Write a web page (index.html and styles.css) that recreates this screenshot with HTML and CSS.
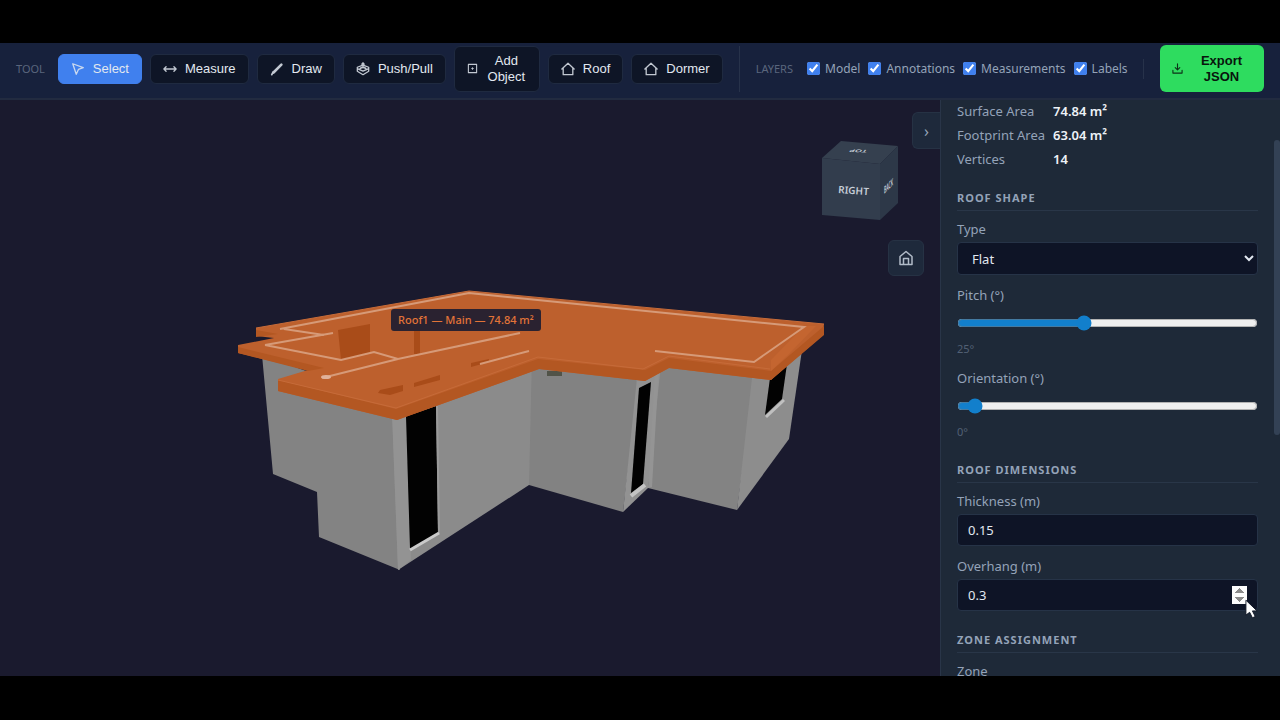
FILE: index.html
```html
<!DOCTYPE html>
<html lang="en">
<head>
<meta charset="utf-8">
<title>Roof Editor</title>
<link rel="stylesheet" href="styles.css">
</head>
<body>
<div class="app">
  <header class="toolbar">
    <span class="caption">TOOL</span>
    <div class="tools">
      <button class="tool tool-active" type="button"><svg class="icon" viewBox="0 0 16 16"><path d="M2 2l12 4.500-5.500 2L6 14z"/></svg><span>Select</span></button>
      <button class="tool" type="button"><svg class="icon" viewBox="0 0 16 16"><path d="M1 8h14M3.500 5.500L1 8 3.500 10.500M12.500 5.500L15 8 12.500 10.500"/></svg><span>Measure</span></button>
      <button class="tool" type="button"><svg class="icon" viewBox="0 0 16 16"><path d="M4 12L13 3" stroke-width="3"/><path d="M2 14.500l1.500-3" stroke-width="2"/></svg><span>Draw</span></button>
      <button class="tool" type="button"><svg class="icon" viewBox="0 0 16 16"><path d="M8 3.500L1.500 6v4.500L8 14.500l6.500-4V6zM1.500 7.500L8 10.500l6.500-3M4 8.500C5 5.500 11 5.500 12 8.500M8 1v4"/><circle cx="8" cy="2.500" r="1.200"/></svg><span>Push/Pull</span></button>
      <button class="tool tool-wrap" type="button"><svg class="icon icon-small" viewBox="0 0 12 12"><rect x="1.500" y="1.500" width="9" height="9"/><path d="M6 5.200v1.600M5.200 6h1.600"/></svg><span>Add Object</span></button>
      <button class="tool" type="button"><svg class="icon" viewBox="0 0 16 16"><path d="M1 8L8 1.500 15 8M2.500 7v7.500h11V7"/></svg><span>Roof</span></button>
      <button class="tool" type="button"><svg class="icon" viewBox="0 0 16 16"><path d="M1 8L8 1.500 15 8M2.500 7v7.500h11V7"/></svg><span>Dormer</span></button>
    </div>
    <div class="layers">
      <span class="caption">LAYERS</span>
      <label class="layer"><input type="checkbox" checked>Model</label>
      <label class="layer"><input type="checkbox" checked>Annotations</label>
      <label class="layer"><input type="checkbox" checked>Measurements</label>
      <label class="layer"><input type="checkbox" checked>Labels</label>
    </div>
    <span class="divider"></span>
    <button class="export" type="button"><svg class="icon icon-small" viewBox="0 0 12 12"><path d="M6 1v6M3.500 5L6 7.500 8.500 5M1 8v3h10V8"/></svg><span>Export JSON</span></button>
  </header>
  <div class="workspace">
    <main class="viewport">
      <svg class="scene" viewBox="0 0 940 576" preserveAspectRatio="xMidYMid slice" role="img" aria-label="Building model">
        <g transform="translate(0 -100)">
          <path fill="#838383" d="M262 355L400 405V570L319 537L317 492L273 474z"/>
          <path fill="#828282" d="M529 360L640 370L623 512L529 485z"/>
          <path fill="#8b8b8b" d="M392 410L532 355L529 485L398 570z"/>
          <path fill="#939393" d="M392 414L407 408L411 560L398 570z"/>
          <path fill="#020202" d="M406 416L436 406L438 533L410 549z"/>
          <path fill="none" stroke="#9a9a9a" stroke-width="2" d="M437 406L439 534"/>
          <path fill="none" stroke="#cacaca" stroke-width="3" d="M410 550L439 533"/>
          <path fill="#929292" d="M637 378L668 364L648 488L623 512z"/>
          <path fill="#838383" d="M661 364L755 374L737 510L648 488z"/>
          <path fill="#8d8d8d" d="M752 378L802 350L789 439L737 510z"/>
          <path fill="#949494" d="M659 366L652 487L648 488L655 370z"/>
          <path fill="#020202" d="M639 388L651 382L643 484L631 493z"/>
          <path fill="none" stroke="#c4c4c4" stroke-width="4" d="M631 496L645 485"/>
          <path fill="#020202" d="M770 378L787 364L782 399L765 415z"/>
          <path fill="none" stroke="#c0c0c0" stroke-width="3" d="M766 417L784 400"/>
          <rect x="547" y="371" width="15" height="5" fill="#515348"/>
          <path fill="#bd602d" d="M256 328L469 291L824 324L823 335L771 380L669 368L645 381L539 369L397 420L278 391V379L308 370L238 353V345L274 338L256 336z"/>
          <path fill="#b35722" d="M278 380L396 409L538 359L645 370L669 358L771 371L824 326V335L771 380L669 368L645 381L539 369L397 420L278 391z"/>
          <path fill="#b35722" d="M238 347L324 368L308 371L238 353zM256 330L278 334L256 337z"/>
          <path fill="#a94c19" d="M338 330L370 324V353L341 360zM414 331L420 329V354H414zM380 390L403 385V391L390 395L378 393zM414 383L440 375V380L414 387zM471 363L489 359V362L471 367z"/>
          <path fill="#c46530" d="M771 360L804 326L816 326L788 355L771 371z"/>
          <path fill="none" stroke="#c66b39" stroke-width="1" d="M256 328L469 291L824 324M278 380L396 408L538 357L643 369L669 356L770 369"/>
          <path fill="none" stroke="#d69a78" stroke-width="2" d="M280 329L469 293L804 327L754 362L655 351M284 329L324 335M265 345L341 360L374 352L398 359L520 333M265 345L333 333M322 378L398 359M480 364L529 351"/>
          <ellipse cx="326" cy="377" rx="5" ry="2" fill="#e0b199"/>
        </g>
      </svg>
      <span class="roof-label">Roof1 — Main — 74.84 m²</span>
      <svg class="view-cube" viewBox="0 0 80 84" role="img" aria-label="View cube">
        <path fill="#35404f" d="M1 19L20 2L77 7L59 25z"/>
        <path fill="#323d4d" d="M1 19L59 25V81L1 76z"/>
        <path fill="#2d3848" d="M59 25L77 7V64L59 81z"/>
        <text class="cube-text" transform="translate(17 54) rotate(4)">RIGHT</text>
        <text class="cube-text cube-top" transform="matrix(-1 -.05 .3 -.4 47 11)">TOP</text>
        <text class="cube-text cube-side" transform="matrix(.35 -.35 0 1 63 55)">BACK</text>
      </svg>
      <button class="home" type="button" aria-label="Reset view"><svg class="icon" viewBox="0 0 16 16"><path d="M2 6.500L8 1.500l6 5v8H2zM5.500 14V8.500h5V14"/></svg></button>
      <button class="collapse" type="button" aria-label="Collapse panel">›</button>
    </main>
    <aside class="panel">
      <div class="panel-content">
        <dl class="facts">
          <dt>Surface Area</dt><dd>74.84 m²</dd>
          <dt>Footprint Area</dt><dd>63.04 m²</dd>
          <dt>Vertices</dt><dd>14</dd>
        </dl>
        <h2>ROOF SHAPE</h2>
        <div class="field"><label for="type">Type</label><select id="type" class="control"><option>Flat</option><option>Gable</option></select></div>
        <div class="field"><label for="pitch">Pitch (°)</label><input id="pitch" class="slider" type="range" min="0" max="60" value="25"><output class="value" for="pitch">25°</output></div>
        <div class="field"><label for="orientation">Orientation (°)</label><input id="orientation" class="slider" type="range" min="-13" max="347" value="0"><output class="value" for="orientation">0°</output></div>
        <h2>ROOF DIMENSIONS</h2>
        <div class="field"><label for="thickness">Thickness (m)</label><input id="thickness" class="control number" type="number" step="0.05" value="0.15"></div>
        <div class="field"><label for="overhang">Overhang (m)</label><input id="overhang" class="control number stepping" type="number" step="0.1" value="0.3"></div>
        <h2>ZONE ASSIGNMENT</h2>
        <div class="field"><label for="zone">Zone</label><select id="zone" class="control"><option>Main</option></select></div>
      </div>
      <span class="scroll-thumb"></span>
      <svg class="pointer" viewBox="0 0 14 22"><path fill="#fff" stroke="#111827" d="M1 1v16l4-3 3 6 3-1.500-3-6h5z"/></svg>
    </aside>
  </div>
</div>
</body>
</html>
```
FILE: styles.css
```css
* { box-sizing: border-box; }
body { margin: 0; background: #000; color: #e2e8f0; font: 13px/20px "Noto Sans", sans-serif; }
button, select, input { font: inherit; }
.app { height: 100vh; padding: 43px 0 44px; display: flex; flex-direction: column; }
.toolbar { display: flex; align-items: center; flex: none; height: 57px; padding: 0 16px 4px; background: #17213c; border-bottom: 2px solid #222b40; }
.caption { color: #5a667c; font-size: 11px; }
.tools { display: flex; align-items: center; gap: 8px; height: 46px; margin-left: 13px; padding-right: 16px; border-right: 1px solid #27324a; }
.tool, .export { display: flex; flex: none; align-items: center; justify-content: center; gap: 8px; padding: 4px 12px; border: 1px solid #1f2a40; border-radius: 6px; background: #0e1526; color: #e2e8f0; font: 13px/16px "Liberation Sans", sans-serif; }
.tool { min-height: 30px; }
.tool-active { background: #4080ee; border-color: #4080ee; }
.tool-wrap { width: 86px; height: 46px; }
.icon { flex: none; width: 14px; height: 14px; fill: none; stroke: currentColor; stroke-width: 1.5; stroke-linejoin: round; stroke-linecap: round; opacity: .85; }
.icon-small { width: 11px; height: 11px; stroke-width: 1.2; }
.layers { display: flex; align-items: center; gap: 8px; margin-left: 16px; color: #94a3b8; font-size: 12px; white-space: nowrap; }
.layers .caption { margin-right: 6px; }
.layer { display: flex; align-items: center; gap: 5px; }
.layer input { width: 13px; height: 13px; margin: 0; accent-color: #4080ee; }
.divider { width: 1px; height: 20px; margin-left: auto; background: #27324a; }
.export { width: 104px; height: 47px; margin-left: 16px; border: 0; background: #2edc5f; color: #08150d; font-weight: bold; }
.export span { flex: 1; }
.workspace { flex: 1; min-height: 0; display: flex; }
.viewport { position: relative; flex: 1; min-width: 0; overflow: hidden; background: #1a1a2e; }
.scene { display: block; width: 100%; height: 100%; }
.roof-label { position: absolute; left: 391px; top: 209px; padding: 2px 7px; border-radius: 3px; background: #2a2230; color: #e27438; font-size: 11px; font-weight: 500; line-height: 18px; white-space: nowrap; }
.view-cube { position: absolute; right: 39px; top: 39px; width: 80px; height: 84px; }
.cube-text { fill: #c7ced8; font-size: 10px; font-weight: 600; }
.cube-top { font-size: 9px; }
.home { position: absolute; right: 16px; top: 140px; display: grid; place-items: center; width: 36px; height: 36px; padding: 0; border: 1px solid #263244; border-radius: 6px; background: #1e293b; color: #cbd5e1; }
.home .icon { width: 16px; height: 16px; }
.collapse { position: absolute; right: 0; top: 12px; width: 28px; height: 37px; padding: 0; border: 1px solid #263244; border-right: 0; border-radius: 6px 0 0 6px; background: #1e293b; color: #94a3b8; font-size: 16px; }
.panel { position: relative; flex: none; width: 340px; overflow: hidden; border-left: 1px solid #293548; background: #1e2938; }
.panel-content { padding: 1px 22px 0 16px; }
.facts { display: grid; grid-template-columns: max-content 1fr; gap: 4px 8px; margin: 0; color: #94a3b8; }
.facts dd { margin: 0; color: #eef2f7; font-weight: 600; }
h2 { margin: 15px 0 8px; padding: 4px 0 2px; border-bottom: 1px solid #293648; color: #94a3b8; font-size: 11px; line-height: 20px; font-weight: 700; letter-spacing: 1px; }
.field { display: flex; flex-direction: column; margin-bottom: 10px; color: #94a3b8; }
.control { width: 100%; height: 33px; margin-top: 3px; padding: 4px 10px; border: 1px solid #263347; border-radius: 4px; background: #0e1426; color: #e2e8f0; outline: 0; }
.number { height: 32px; }
.slider { width: 100%; height: 16px; margin: 10px 0 8px; accent-color: #127fcc; }
.value { color: #526074; font-size: 11px; line-height: 19px; }
.stepping::-webkit-inner-spin-button { opacity: 1; }
.scroll-thumb { position: absolute; right: 0; top: 40px; width: 6px; height: 295px; border-radius: 3px; background: #334155; }
.pointer { position: absolute; right: 22px; top: 499px; width: 13px; height: 21px; }
```
